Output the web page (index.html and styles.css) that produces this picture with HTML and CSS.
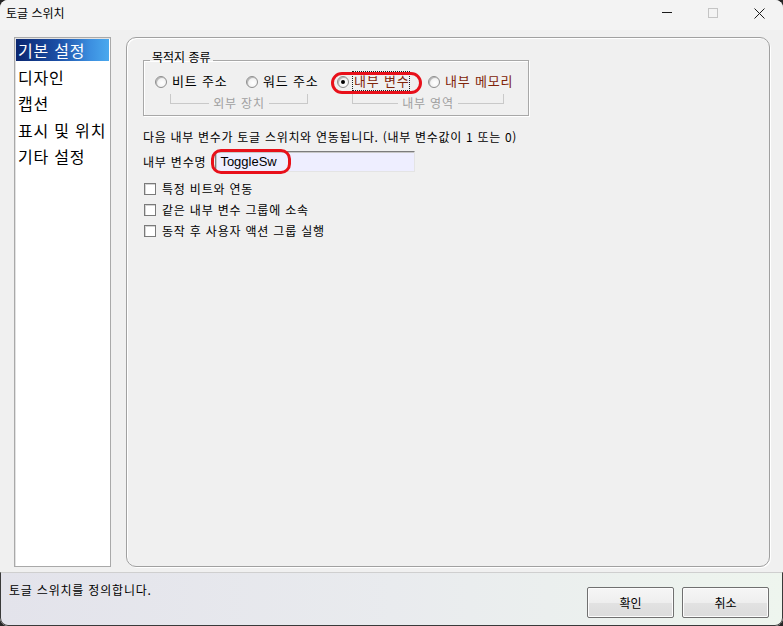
FILE: index.html
```html
<!DOCTYPE html>
<html lang="ko">
<head>
<meta charset="utf-8">
<title>토글 스위치</title>
<link rel="stylesheet" href="styles.css">
</head>
<body>
<div class="window">
  <div class="titlebar">
    <span class="title">토글 스위치</span>
    <div class="controls">
      <span class="ctl"><svg width="10" height="10" viewBox="0 0 10 10"><path d="M0 4.5H10" stroke="#1a1a1a" stroke-width="1"/></svg></span>
      <span class="ctl"><svg width="10" height="10" viewBox="0 0 10 10"><rect x="0.5" y="0.5" width="9" height="9" fill="none" stroke="#c4c4c4"/></svg></span>
      <span class="ctl"><svg width="11" height="11" viewBox="0 0 11 11"><path d="M0.5 0.5L10.5 10.5M10.5 0.5L0.5 10.5" stroke="#1a1a1a" stroke-width="1"/></svg></span>
    </div>
  </div>
  <div class="main">
    <ul class="nav">
      <li class="nav-item active">기본 설정</li>
      <li class="nav-item">디자인</li>
      <li class="nav-item">캡션</li>
      <li class="nav-item">표시 및 위치</li>
      <li class="nav-item">기타 설정</li>
    </ul>
    <div class="panel">
      <fieldset class="group">
        <legend class="legend">목적지 종류</legend>
        <div class="radios">
          <span class="radio"><span class="dot"></span><span class="rlabel">비트 주소</span></span>
          <span class="radio"><span class="dot"></span><span class="rlabel">워드 주소</span></span>
          <span class="radio marked"><span class="dot checked"></span><span class="rlabel accent focus">내부 변수</span></span>
          <span class="radio"><span class="dot"></span><span class="rlabel accent">내부 메모리</span></span>
        </div>
        <div class="sublabels">
          <div class="bracket b1"><span class="seg l"></span><span class="blabel">외부 장치</span><span class="seg r"></span></div>
          <div class="bracket b2"><span class="seg l"></span><span class="blabel">내부 영역</span><span class="seg r"></span></div>
        </div>
      </fieldset>
      <p class="desc">다음 내부 변수가 토글 스위치와 연동됩니다. (내부 변수값이 1 또는 0)</p>
      <div class="field">
        <span class="flabel">내부 변수명</span>
        <span class="input-wrap marked-input"><span class="input">ToggleSw</span></span>
      </div>
      <div class="checks">
        <div class="check"><span class="box"></span><span>특정 비트와 연동</span></div>
        <div class="check"><span class="box"></span><span>같은 내부 변수 그룹에 소속</span></div>
        <div class="check"><span class="box"></span><span>동작 후 사용자 액션 그룹 실행</span></div>
      </div>
    </div>
  </div>
  <div class="status">
    <span class="status-text">토글 스위치를 정의합니다.</span>
    <div class="buttons">
      <button class="btn">확인</button>
      <button class="btn">취소</button>
    </div>
  </div>
</div>
</body>
</html>
```
FILE: styles.css
```css
html, body {
  margin: 0;
  padding: 0;
  background: #262626;
}
*, *::before, *::after { box-sizing: border-box; }

.window {
  width: 783px;
  height: 626px;
  border-radius: 8px;
  overflow: hidden;
  background: #f0f0f0;
  display: flex;
  flex-direction: column;
  font-family: "Noto Sans CJK KR", "Noto Sans", sans-serif;
  font-size: 12px;
  color: #000;
}

.titlebar {
  height: 30px;
  flex: none;
  display: flex;
  align-items: center;
  justify-content: space-between;
  background: #f3f3f3;
}
.title {
  padding-left: 6px;
  line-height: 16px;
  font-size: 12px;
  margin-top: -5px;
}
.controls {
  display: flex;
  align-self: stretch;
  padding-right: 1px;
}
.ctl {
  width: 46px;
  display: flex;
  align-items: center;
  justify-content: center;
  padding-bottom: 4px;
}

.main {
  flex: 1;
  display: flex;
  gap: 15px;
  padding: 7px 13px 5px 14px;
  min-height: 0;
}

.nav {
  list-style: none;
  margin: 0;
  padding: 1px;
  width: 97px;
  flex: none;
  background: #fff;
  border: 1px solid #a9a9a9;
  box-shadow: inset 1px 1px 0 #e2e2e2;
}
.nav-item {
  height: 22px;
  line-height: 22px;
  margin-bottom: 4.5px;
  padding-left: 2px;
  font-size: 16px;
  letter-spacing: 0.8px;
  white-space: nowrap;
}
.nav-item.active {
  color: #fff;
  background: linear-gradient(to right, #0a2670 0%, #1c4fa6 45%, #3c8fe0 80%, #4aa9ee 100%);
}

.panel {
  flex: 1;
  border: 1px solid #a0a0a0;
  border-radius: 10px;
  box-shadow: 1px 1px 0 #ffffff, inset 1px 1px 0 #ffffff;
  padding: 12px 16px 0 16px;
  letter-spacing: 0.8px;
}

.group {
  width: 386px;
  margin: 0;
  padding: 2px 0 3px 11px;
  border: 1px solid #a8a8a8;
  box-shadow: inset 1px 1px 0 #fff, 1px 1px 0 #fff;
}
.legend {
  margin-left: -5px;
  padding: 0 2px 6px 2px;
  line-height: 14px;
  font-size: 12px;
  letter-spacing: 0;
}

.radios {
  display: grid;
  grid-template-columns: repeat(4, 91px);
  height: 18px;
  align-items: center;
}
.radio {
  display: inline-flex;
  align-items: center;
  gap: 5px;
  height: 18px;
  font-size: 13px;
  line-height: 18px;
  white-space: nowrap;
  position: relative;
  justify-self: start;
}
.dot {
  width: 12px;
  height: 12px;
  flex: none;
  border-radius: 50%;
  border: 1px solid #8e8e8e;
  background: radial-gradient(circle at 60% 60%, #ffffff 0%, #f4f4f4 45%, #d6d6d6 100%);
  box-shadow: inset 1px 1px 0 #b8b8b8;
  margin-top: 2px;
  display: flex;
  align-items: center;
  justify-content: center;
}
.dot.checked::before {
  content: "";
  width: 4px;
  height: 4px;
  border-radius: 50%;
  background: #000;
}
.rlabel.accent {
  color: #80240a;
}
.rlabel.focus {
  outline: 1px dotted #1a1a1a;
  outline-offset: 0;
  padding: 0 0 0 1px;
  margin-left: -1px;
}
.marked::after {
  content: "";
  position: absolute;
  left: -6px;
  top: 0;
  width: 91px;
  height: 22px;
  border: 3px solid #e8101a;
  border-radius: 11px;
  pointer-events: none;
}

.sublabels {
  display: flex;
  margin-top: 4px;
  height: 18px;
}
.bracket {
  display: flex;
  align-items: flex-end;
  height: 18px;
}
.b1 { margin-left: 15px; width: 138px; }
.b2 { margin-left: 44px; width: 152px; }
.seg {
  flex: 1;
  height: 10px;
  margin-bottom: 8px;
  border-bottom: 1px solid #c9c9c9;
}
.seg.l { border-left: 1px solid #c9c9c9; }
.seg.r { border-right: 1px solid #c9c9c9; }
.blabel {
  padding: 0 4px;
  line-height: 18px;
  color: #a0a0a0;
  white-space: nowrap;
}

.desc {
  margin: 13px 0 0 0;
  line-height: 16px;
  white-space: nowrap;
  letter-spacing: 0.7px;
}

.field {
  display: flex;
  align-items: center;
  gap: 9px;
  margin-top: 6px;
  height: 21px;
}
.flabel {
  line-height: 16px;
}
.input-wrap {
  position: relative;
  display: block;
}
.input {
  display: block;
  width: 200px;
  height: 21px;
  padding-left: 4px;
  line-height: 19px;
  font-family: "Liberation Sans", Arial, sans-serif;
  font-size: 13px;
  letter-spacing: 0;
  background: #eeeeff;
  border: 1px solid;
  border-color: #7c7c7c #e4e4e4 #e4e4e4 #7c7c7c;
  box-shadow: inset 1px 1px 0 #c8c8c8;
}
.marked-input::after {
  content: "";
  position: absolute;
  left: -4px;
  top: -2px;
  width: 80px;
  height: 25px;
  border: 3px solid #e8101a;
  border-radius: 10px;
  pointer-events: none;
}

.checks {
  margin-top: 6px;
}
.check {
  display: flex;
  align-items: center;
  gap: 6px;
  height: 21px;
  padding-left: 1px;
  line-height: 16px;
}
.box {
  width: 12px;
  height: 12px;
  background: #fff;
  border: 1px solid #7a7a7a;
  box-shadow: inset 1px 1px 0 #d4d4d4;
  flex: none;
}

.status {
  height: 54px;
  flex: none;
  display: flex;
  justify-content: space-between;
  align-items: flex-start;
  padding: 9px 13px 0 8px;
  border-top: 1px solid #cfcfcf;
  border-left: 1px solid #3a3a3a;
  border-right: 1px solid #3a3a3a;
  border-bottom: 1px solid #3a3a3a;
  border-radius: 0 0 8px 8px;
  background: linear-gradient(to right, #e3e3eb 0%, #e9ebee 50%, #eef5ee 100%);
}
.status-text {
  line-height: 16px;
  letter-spacing: 0.8px;
}
.buttons {
  display: flex;
  gap: 8px;
  margin-top: 5px;
}
.btn {
  width: 87px;
  height: 31px;
  font-family: "Noto Sans CJK KR", "Noto Sans", sans-serif;
  font-size: 12px;
  color: #000;
  border: 1px solid #707070;
  border-radius: 2px;
  background: linear-gradient(to bottom, #f6f6f6 0%, #eeeeee 50%, #e2e2e2 51%, #dcdcdc 100%);
  box-shadow: inset 0 0 0 1px #fcfcfc;
  padding: 0;
}
```
